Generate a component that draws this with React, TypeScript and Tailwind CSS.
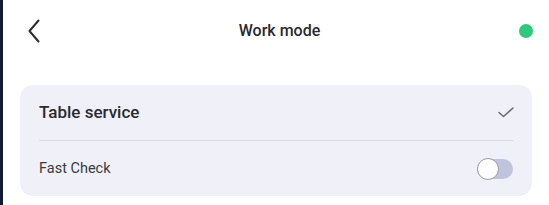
const App = () => {
  return (
    <div className="flex h-[205px] w-[549px] bg-white font-['Roboto',sans-serif]">
      <div className="w-[3px] bg-[#141a33]" />
      <div className="flex flex-1 flex-col">
        <div className="flex h-[62px] items-center justify-between pl-[25px] pr-[16px]">
          <svg width="12" height="24" viewBox="0 0 12 24" fill="none">
            <path
              d="M10.5 1.5 L1.5 12 L10.5 22.5"
              stroke="#2b2b33"
              strokeWidth="2"
              strokeLinecap="round"
              strokeLinejoin="round"
            />
          </svg>
          <div className="text-[16px] font-medium text-[#2a2a30]">Work mode</div>
          <div className="h-[14px] w-[14px] rounded-full bg-[#2fc97c]" />
        </div>
        <div className="mx-[17px] mt-[23px] rounded-[13px] bg-[#f0f0f8] px-[19px]">
          <div className="flex h-[56px] items-center justify-between border-b border-[#dcdce6]">
            <span className="text-[17px] font-medium text-[#2a2a30]">Table service</span>
            <svg width="16" height="11" viewBox="0 0 16 11" fill="none" className="mr-[-1px]">
              <path
                d="M1 5.5 L5.5 9.5 L15 1"
                stroke="#6e6e7a"
                strokeWidth="1.6"
                strokeLinecap="round"
                strokeLinejoin="round"
              />
            </svg>
          </div>
          <div className="flex h-[55px] items-center justify-between">
            <span className="text-[14.5px] text-[#3a3a42]">Fast Check</span>
            <div className="relative h-[20px] w-[36px] rounded-full bg-[#c1c3dd]">
              <div className="absolute left-0 top-[-1px] h-[22px] w-[22px] rounded-full border border-[#9a9aa6] bg-white" />
            </div>
          </div>
        </div>
      </div>
    </div>
  );
};

export default App;
